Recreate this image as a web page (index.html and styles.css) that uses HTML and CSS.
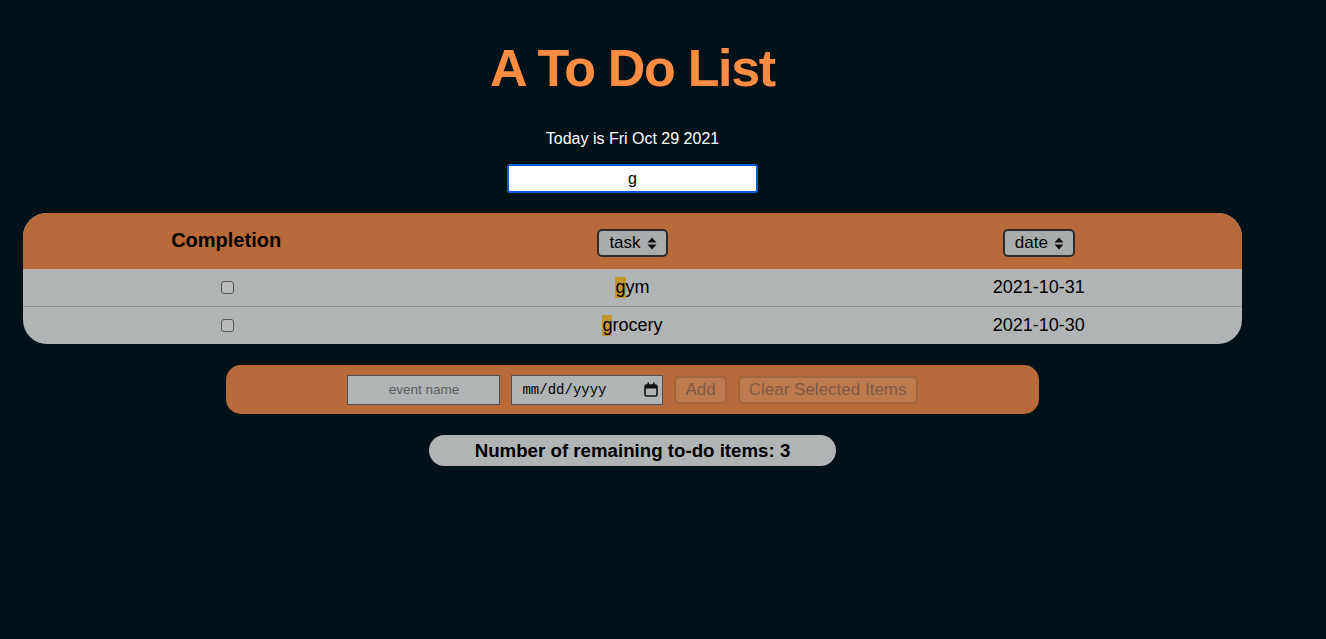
FILE: index.html
```html
<!DOCTYPE html>
<html>
<head>
<meta charset="utf-8">
<link rel="stylesheet" href="styles.css">
</head>
<body>
<main class="app">
  <h1 class="title">A To Do List</h1>
  <p class="today">Today is Fri Oct 29 2021</p>
  <input class="search" type="text" value="g">
  <div class="table">
    <div class="thead">
      <div class="cell th">Completion</div>
      <div class="cell"><button class="sort">task <svg width="10" height="13" viewBox="0 0 10 13"><path d="M5 0.5 L9.5 5.5 H0.5 Z M5 12.5 L9.5 7.5 H0.5 Z" fill="#111"/></svg></button></div>
      <div class="cell"><button class="sort">date <svg width="10" height="13" viewBox="0 0 10 13"><path d="M5 0.5 L9.5 5.5 H0.5 Z M5 12.5 L9.5 7.5 H0.5 Z" fill="#111"/></svg></button></div>
    </div>
    <div class="row">
      <div class="cell"><span class="check"></span></div>
      <div class="cell"><mark>g</mark>ym</div>
      <div class="cell">2021-10-31</div>
    </div>
    <div class="row">
      <div class="cell"><span class="check"></span></div>
      <div class="cell"><mark>g</mark>rocery</div>
      <div class="cell">2021-10-30</div>
    </div>
  </div>
  <form class="addbar">
    <input class="event" type="text" placeholder="event name">
    <div class="dateinput"><span>mm/dd/yyyy</span><svg width="14" height="15" viewBox="0 0 14 15"><rect x="1" y="3" width="12" height="11" rx="1.5" fill="none" stroke="#111" stroke-width="1.6"/><rect x="1" y="3" width="12" height="3.5" fill="#111"/><rect x="3.5" y="0.5" width="1.6" height="3.5" fill="#111"/><rect x="8.9" y="0.5" width="1.6" height="3.5" fill="#111"/></svg></div>
    <button class="dis" type="button">Add</button>
    <button class="dis" type="button">Clear Selected Items</button>
  </form>
  <div class="count">Number of remaining to-do items: 3</div>
</main>
</body>
</html>
```
FILE: styles.css
```css
html, body {
  margin: 0;
  background: #001117;
  height: 100%;
}
body {
  font-family: "Liberation Sans", Arial, sans-serif;
}
.app {
  width: 1265px;
  display: flex;
  flex-direction: column;
  align-items: center;
}
.title {
  margin: 36px 0 0;
  font-size: 52px;
  line-height: 64px;
  letter-spacing: -1.3px;
  color: #ff8c42;
  font-weight: bold;
}
.today {
  margin: 30px 0 0;
  color: #fff;
  font-size: 16px;
  line-height: 18px;
}
.search {
  margin-top: 16px;
  width: 251px;
  height: 29px;
  box-sizing: border-box;
  border: 2px solid #0a5bd6;
  border-radius: 3px;
  outline: none;
  background: #fff;
  text-align: center;
  font-family: "Liberation Sans", Arial, sans-serif;
  font-size: 16px;
  color: #000;
  padding: 0;
}
.table {
  margin-top: 20px;
  width: 1219px;
  border-radius: 24px;
  overflow: hidden;
  background: #b1b4b5;
}
.thead {
  display: grid;
  grid-template-columns: 1fr 1fr 1fr;
  height: 56px;
  background: #b86a3a;
}
.row {
  display: grid;
  grid-template-columns: 1fr 1fr 1fr;
  height: 37px;
  font-size: 18px;
  color: #000;
}
.row + .row {
  border-top: 1px solid #8e9192;
}
.cell {
  display: flex;
  align-items: center;
  justify-content: center;
}
.th {
  font-weight: bold;
  font-size: 20px;
  margin-top: -2px;
}
.sort {
  display: flex;
  align-items: center;
  gap: 6px;
  height: 28px;
  padding: 0 9px 0 10px;
  background: #a9acad;
  border: 2px solid #2a2c2d;
  border-radius: 5px;
  font-family: "Liberation Sans", Arial, sans-serif;
  font-size: 17px;
  color: #000;
  margin-top: 4px;
}
.check {
  width: 11px;
  height: 11px;
  border: 1px solid #555;
  border-radius: 3px;
  background: #b8babb;
  margin-left: 2px;
}
mark {
  background: #c0972f;
  color: #000;
}
.addbar {
  margin-top: 21px;
  width: 813px;
  height: 49px;
  box-sizing: border-box;
  background: #b86a3a;
  border-radius: 15px;
  display: flex;
  align-items: center;
  justify-content: center;
  gap: 11px;
}
.event {
  width: 153px;
  height: 30px;
  box-sizing: border-box;
  background: #b1b4b5;
  border: 1px solid #4f5253;
  padding: 0;
  text-align: center;
  font-family: "Liberation Sans", Arial, sans-serif;
  font-size: 13.5px;
  margin-right: 0;
}
.event::placeholder {
  color: #5a5d5e;
}
.dateinput {
  width: 152px;
  height: 30px;
  box-sizing: border-box;
  background: #b1b4b5;
  border: 1px solid #4f5253;
  display: flex;
  align-items: center;
  justify-content: space-between;
  padding: 0 4px 0 10px;
  font-family: "Liberation Mono", "Courier New", monospace;
  font-size: 14px;
  color: #000;
}
.dis {
  height: 28px;
  box-sizing: border-box;
  background: #be7a4e;
  border: 2px solid #a26540;
  border-radius: 5px;
  color: #7d5b47;
  font-family: "Liberation Sans", Arial, sans-serif;
  font-size: 17px;
  padding: 0 9px;
}
.count {
  margin-top: 21px;
  width: 407px;
  height: 31px;
  border-radius: 16px;
  background: #b1b4b5;
  display: flex;
  align-items: center;
  justify-content: center;
  font-weight: bold;
  font-size: 18.7px;
  color: #000;
}
```
